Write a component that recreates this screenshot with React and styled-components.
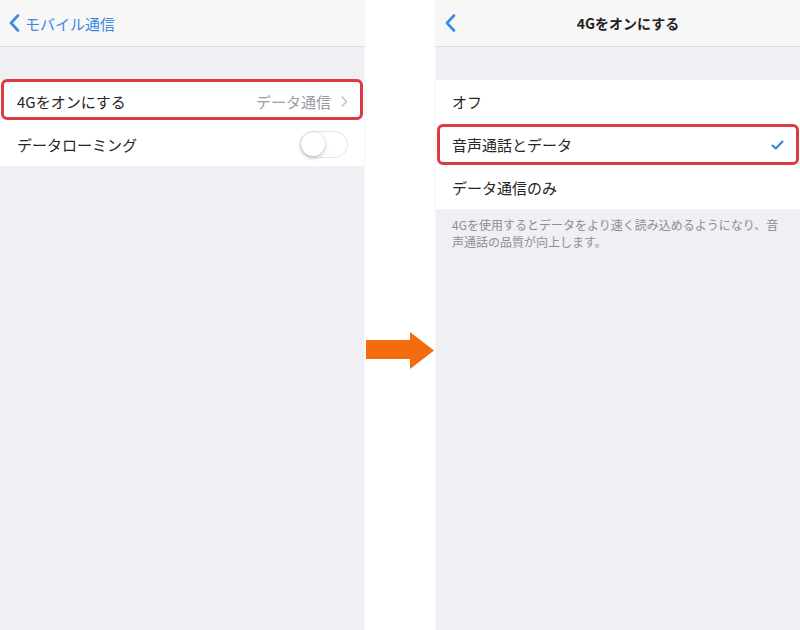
import React from "react";
import styled, { createGlobalStyle, css } from "styled-components";

const Global = createGlobalStyle`
  html, body { margin: 0; padding: 0; background: #fff; }
  body { font-family: "Noto Sans CJK JP", "Noto Sans", sans-serif; }
  * { box-sizing: border-box; }
`;

const Page = styled.div`
  width: 800px;
  height: 630px;
  display: flex;
  overflow: hidden;
  background: #fff;
`;

const Panel = styled.div`
  width: 364px;
  height: 100%;
  background: #efeff4;
  display: flex;
  flex-direction: column;
  box-shadow: 0 0 4px rgba(0, 0, 0, 0.06);
`;

const Gap = styled.div`
  flex: 1;
  display: flex;
  justify-content: center;
  align-items: flex-start;
  padding-top: 332px;
`;

const NavBar = styled.div`
  height: 47px;
  flex: none;
  background: #f7f7f8;
  border-bottom: 1px solid #dddde2;
  display: flex;
  align-items: center;
  padding-left: 9px;
  position: relative;
`;

const BackLink = styled.span`
  display: flex;
  align-items: center;
  gap: 5px;
  color: #3d8ae0;
  font-size: 15px;
`;

const Title = styled.span`
  position: absolute;
  left: 20px;
  right: 0;
  text-align: center;
  font-size: 14px;
  font-weight: 700;
  color: #222;
  pointer-events: none;
`;

const Spacer = styled.div`
  height: 33px;
  flex: none;
`;

const Group = styled.div`
  background: #fff;
  display: flex;
  flex-direction: column;
`;

const Row = styled.div`
  height: 43px;
  display: flex;
  align-items: center;
  padding: 0 16px 0 17px;
  position: relative;
  font-size: 15px;
  color: #262626;
  ${(p) => p.$right && css`padding-left: 16px;`}
  ${(p) =>
    p.$highlight &&
    css`
      &::after {
        content: "";
        position: absolute;
        top: ${p.$hlTop}px;
        bottom: ${p.$hlBottom}px;
        left: 1px;
        right: 1px;
        border: 3px solid #dc3a45;
        border-radius: 6px;
        pointer-events: none;
      }
    `}
`;

const Label = styled.span`
  flex: 1;
`;

const Value = styled.span`
  color: #9a9aa0;
  font-size: 15px;
  display: flex;
  align-items: center;
  gap: 10px;
`;

const Toggle = styled.span`
  width: 48px;
  height: 27px;
  border-radius: 14px;
  border: 1.5px solid #e3e3e6;
  background: #fff;
  position: relative;
  &::before {
    content: "";
    position: absolute;
    left: 0;
    top: 0;
    width: 24px;
    height: 24px;
    border-radius: 50%;
    background: #fff;
    box-shadow: 0 2px 4px rgba(0, 0, 0, 0.22), 0 0 1px rgba(0, 0, 0, 0.2);
  }
`;

const Footer = styled.div`
  padding: 7px 12px 0 16px;
  font-size: 12px;
  line-height: 17px;
  color: #8e8e93;
  white-space: nowrap;
`;

const Chevron = ({ color = "#3d8ae0", w = 11, h = 18, sw = 2.6 }) => (
  <svg width={w} height={h} viewBox="0 0 11 18">
    <path d="M9 1.5 L2 9 L9 16.5" fill="none" stroke={color} strokeWidth={sw} strokeLinecap="round" strokeLinejoin="round" />
  </svg>
);

const Disclosure = () => (
  <svg width="7" height="11" viewBox="0 0 7 11">
    <path d="M1.2 1 L5.5 5.5 L1.2 10" fill="none" stroke="#c2c2c8" strokeWidth="1.6" strokeLinecap="round" strokeLinejoin="round" />
  </svg>
);

const Check = () => (
  <svg width="13" height="10" viewBox="0 0 13 10">
    <path d="M1.5 5.5 L4.8 8.5 L11.5 1.5" fill="none" stroke="#3a7fd0" strokeWidth="2" strokeLinecap="round" strokeLinejoin="round" />
  </svg>
);

const Arrow = () => (
  <svg width="69" height="37" viewBox="0 0 69 37">
    <path d="M0 8 H44 V0 L68 18.5 L44 37 V27 H0 Z" fill="#f36d0e" />
  </svg>
);

export default function App() {
  return (
    <>
      <Global />
      <Page>
        <Panel>
          <NavBar>
            <BackLink>
              <Chevron />
              モバイル通信
            </BackLink>
          </NavBar>
          <Spacer />
          <Group>
            <Row $highlight $hlTop={-1} $hlBottom={3}>
              <Label>4Gをオンにする</Label>
              <Value>
                データ通信
                <Disclosure />
              </Value>
            </Row>
            <Row>
              <Label>データローミング</Label>
              <Toggle />
            </Row>
          </Group>
        </Panel>
        <Gap>
          <Arrow />
        </Gap>
        <Panel>
          <NavBar>
            <BackLink>
              <Chevron />
            </BackLink>
            <Title>4Gをオンにする</Title>
          </NavBar>
          <Spacer />
          <Group>
            <Row $right>
              <Label>オフ</Label>
            </Row>
            <Row $right $highlight $hlTop={1} $hlBottom={1}>
              <Label>音声通話とデータ</Label>
              <Check />
            </Row>
            <Row $right>
              <Label>データ通信のみ</Label>
            </Row>
          </Group>
          <Footer>
            4Gを使用するとデータをより速く読み込めるようになり、音
            <br />
            声通話の品質が向上します。
          </Footer>
        </Panel>
      </Page>
    </>
  );
}
